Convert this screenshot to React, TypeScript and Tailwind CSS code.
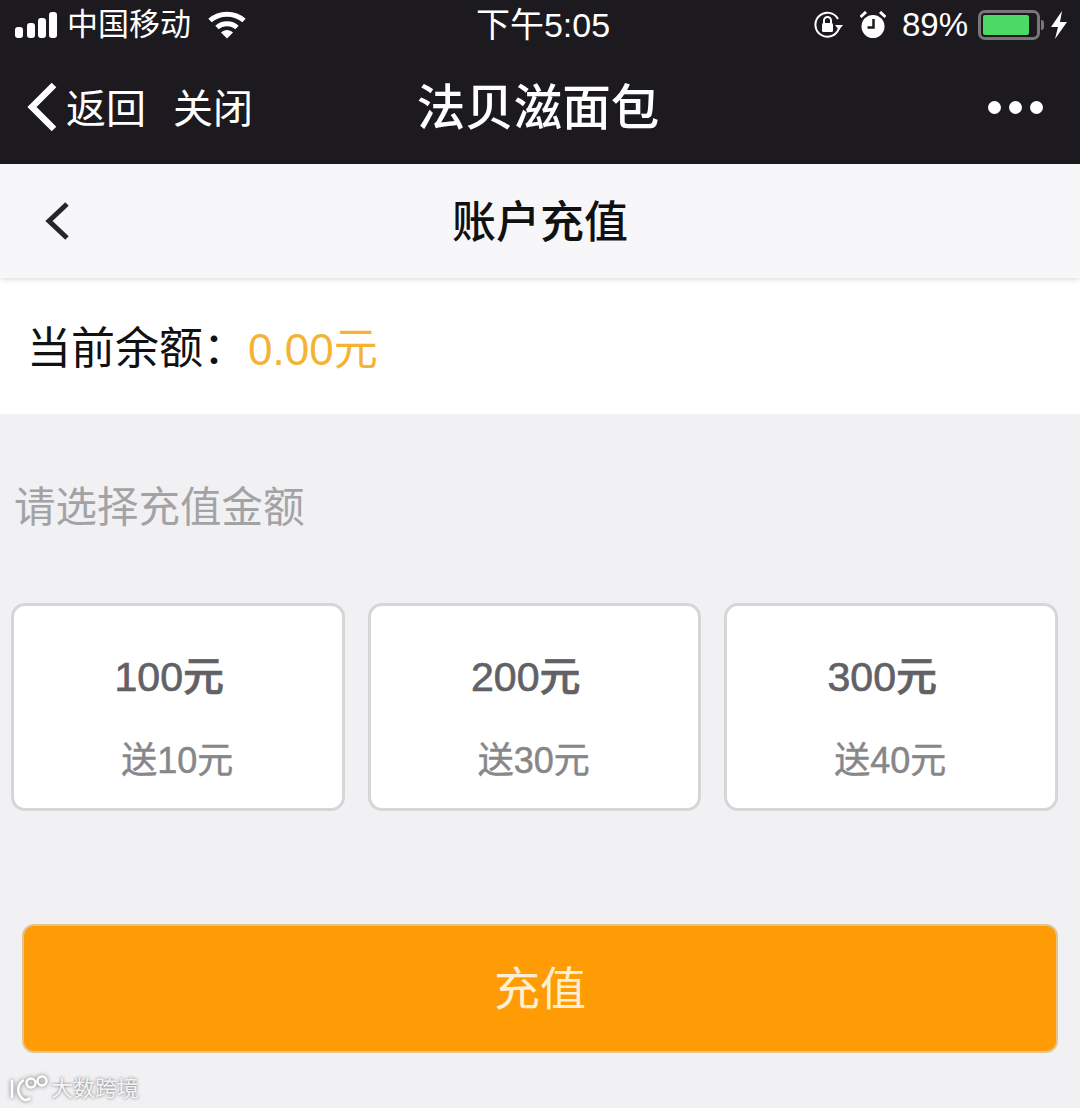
import React from "react";

const FONT = "font-['Liberation_Sans','Noto_Sans_CJK_SC',sans-serif]";

const amounts = [
  { value: "100元", gift: "送10元" },
  { value: "200元", gift: "送30元" },
  { value: "300元", gift: "送40元" },
];

function Signal() {
  return (
    <svg width="44" height="26" viewBox="0 0 44 26" fill="#fff">
      <rect x="0" y="15" width="8" height="11" rx="3" />
      <rect x="12" y="11" width="8" height="15" rx="3" />
      <rect x="23" y="6" width="8" height="20" rx="3" />
      <rect x="34" y="0" width="8" height="26" rx="3" />
    </svg>
  );
}

function Wifi() {
  return (
    <svg width="38" height="28" viewBox="0 0 38 28" fill="none">
      <path d="M2 9.5C11.5 1 26.5 1 36 9.5" stroke="#fff" strokeWidth="5" />
      <path d="M9 16.5C14.5 11.5 23.5 11.5 29 16.5" stroke="#fff" strokeWidth="5" />
      <path d="M13 21.5C16.5 18 21.5 18 25 21.5L19 27.5Z" fill="#fff" />
    </svg>
  );
}

function RotationLock() {
  return (
    <svg width="30" height="28" viewBox="0 0 30 28" fill="none">
      <path d="M25 17A12 12 0 1 1 24 8" stroke="#fff" strokeWidth="2" />
      <path d="M21 14L29 14L25 19Z" fill="#fff" />
      <rect x="8" y="12" width="11" height="9" rx="1.5" fill="#fff" />
      <path d="M10 12V9.5A3.5 3.5 0 0 1 17 9.5V12" stroke="#fff" strokeWidth="2" />
    </svg>
  );
}

function Alarm() {
  return (
    <svg width="26" height="28" viewBox="0 0 26 28" fill="none">
      <circle cx="13" cy="15.5" r="11.5" fill="#fff" />
      <path d="M0.5 6L6 1M25.5 6L20 1" stroke="#fff" strokeWidth="3" />
      <path d="M13.5 8V16.5H7.5" stroke="#1c1a1f" strokeWidth="2.5" />
    </svg>
  );
}

function Battery() {
  return (
    <div className="flex items-center">
      <div className="w-[62px] h-[30px] rounded-[7px] border-[3px] border-[#77767a] p-[2px]">
        <div className="w-[46px] h-full rounded-[2px] bg-[#4cd964]" />
      </div>
      <div className="w-[3px] h-[10px] ml-[1px] rounded-r-sm bg-[#77767a]" />
    </div>
  );
}

function Bolt() {
  return (
    <svg width="18" height="28" viewBox="0 0 18 28" fill="#fff">
      <path d="M12 0L1 16H8L5 28L17 11H10Z" />
    </svg>
  );
}

function AmountCard({ value, gift }: { value: string; gift: string }) {
  return (
    <div className="w-[333.5px] h-[208px] rounded-[14px] border-[3px] border-[#d6d6d8] bg-white flex flex-col items-center">
      <div className="mt-[43px] h-[56px] -ml-[17px] leading-[56px] text-[41px] font-medium text-[#626166] [-webkit-text-stroke:0.7px_#626166] whitespace-nowrap">{value}</div>
      <div className="mt-[34px] h-[44px] -ml-[1px] leading-[44px] text-[36px] text-[#878689] [-webkit-text-stroke:0.5px_#878689] whitespace-nowrap">{gift}</div>
    </div>
  );
}

export default function App() {
  return (
    <div className={`${FONT} relative w-[1080px] h-[1108px] overflow-hidden bg-[#f1f1f3] flex flex-col`}>
      {/* wechat chrome */}
      <div className="h-[164px] bg-[#1c1a1f] text-white">
        <div className="h-[50px] flex items-center justify-between pl-[15px] pr-[12px]">
          <div className="w-[300px] flex items-center">
            <Signal />
            <span className="ml-[8px] text-[31px] leading-[40px]">中国移动</span>
            <span className="ml-[17px]"><Wifi /></span>
          </div>
          <div className="text-[34px] leading-[40px] ml-[3px]">下午5:05</div>
          <div className="w-[300px] flex items-center justify-end">
            <RotationLock />
            <span className="ml-[16px]"><Alarm /></span>
            <span className="ml-[16px] mr-[10px] text-[33px] leading-[40px]">89%</span>
            <Battery />
            <span className="ml-[6px]"><Bolt /></span>
          </div>
        </div>
        <div className="h-[114px] flex items-center justify-between pl-[27px] pr-[37px]">
          <div className="w-[300px] flex items-center">
            <svg width="30" height="50" viewBox="0 0 30 50" fill="none">
              <path d="M27 3L5 25L27 47" stroke="#fff" strokeWidth="6.5" />
            </svg>
            <span className="ml-[9px] mt-[3px] text-[40px] leading-[50px]">返回</span>
            <span className="ml-[27px] mt-[3px] text-[40px] leading-[50px]">关闭</span>
          </div>
          <div className="ml-[6px] mt-[1px] text-[48.5px] leading-[60px] font-medium">法贝滋面包</div>
          <div className="w-[300px] flex justify-end gap-[8px]">
            <span className="w-[13px] h-[13px] rounded-full bg-white" />
            <span className="w-[13px] h-[13px] rounded-full bg-white" />
            <span className="w-[13px] h-[13px] rounded-full bg-white" />
          </div>
        </div>
      </div>

      {/* page header */}
      <div className="h-[114px] bg-[#f7f7f9] shadow-[0_2px_5px_rgba(0,0,0,0.12)] relative flex items-center justify-between px-[44px]">
        <div className="w-[200px]">
          <svg width="28" height="40" viewBox="0 0 28 40" fill="none">
            <path d="M23 3L5 20L23 37" stroke="#26252a" strokeWidth="5" />
          </svg>
        </div>
        <div className="mt-[3px] text-[44px] leading-[56px] font-medium text-[#111]">账户充值</div>
        <div className="w-[200px]" />
      </div>

      {/* balance */}
      <div className="h-[136px] bg-white flex items-center pl-[27px]">
        <span className="mt-[6px] w-[221px] whitespace-nowrap text-[44px] leading-[56px] text-[#111]">当前余额：</span>
        <span className="mt-[8px] text-[44px] leading-[56px] text-[#f5b335]">0.00元</span>
      </div>

      <div className="mt-[69px] pl-[14px] text-[41.5px] leading-[50px] text-[#a3a3a6]">请选择充值金额</div>

      <div className="mt-[70px] pl-[11px] flex gap-[23px]">
        {amounts.map((a) => (
          <AmountCard key={a.value} value={a.value} gift={a.gift} />
        ))}
      </div>

      <div className="mt-[113px] ml-[22px] w-[1036px] h-[129px] pt-[2px] rounded-[12px] border-2 border-[#e3c48f] bg-[#ff9c05] flex items-center justify-center text-[46px] text-[#fdeed5]">
        充值
      </div>

      {/* watermark */}
      <div className="absolute left-[10px] top-[1075px] flex items-center">
        <svg width="40" height="28" viewBox="0 0 40 28" fill="none" stroke="#fff" strokeWidth="2.5" className="drop-shadow-[0_0_2px_rgba(90,90,90,0.9)]">
          <path d="M2 5V23M14 5C7 9 6 18 13 24C15 25.500 18 25 20 23" />
          <circle cx="21" cy="8" r="4.5" />
          <circle cx="32" cy="6" r="4.500" />
        </svg>
        <span className="ml-[1px] text-[22px] leading-[28px] text-[#f5f5f6] [text-shadow:0_0_3px_rgba(90,90,90,0.9)]">大数跨境</span>
      </div>
    </div>
  );
}
